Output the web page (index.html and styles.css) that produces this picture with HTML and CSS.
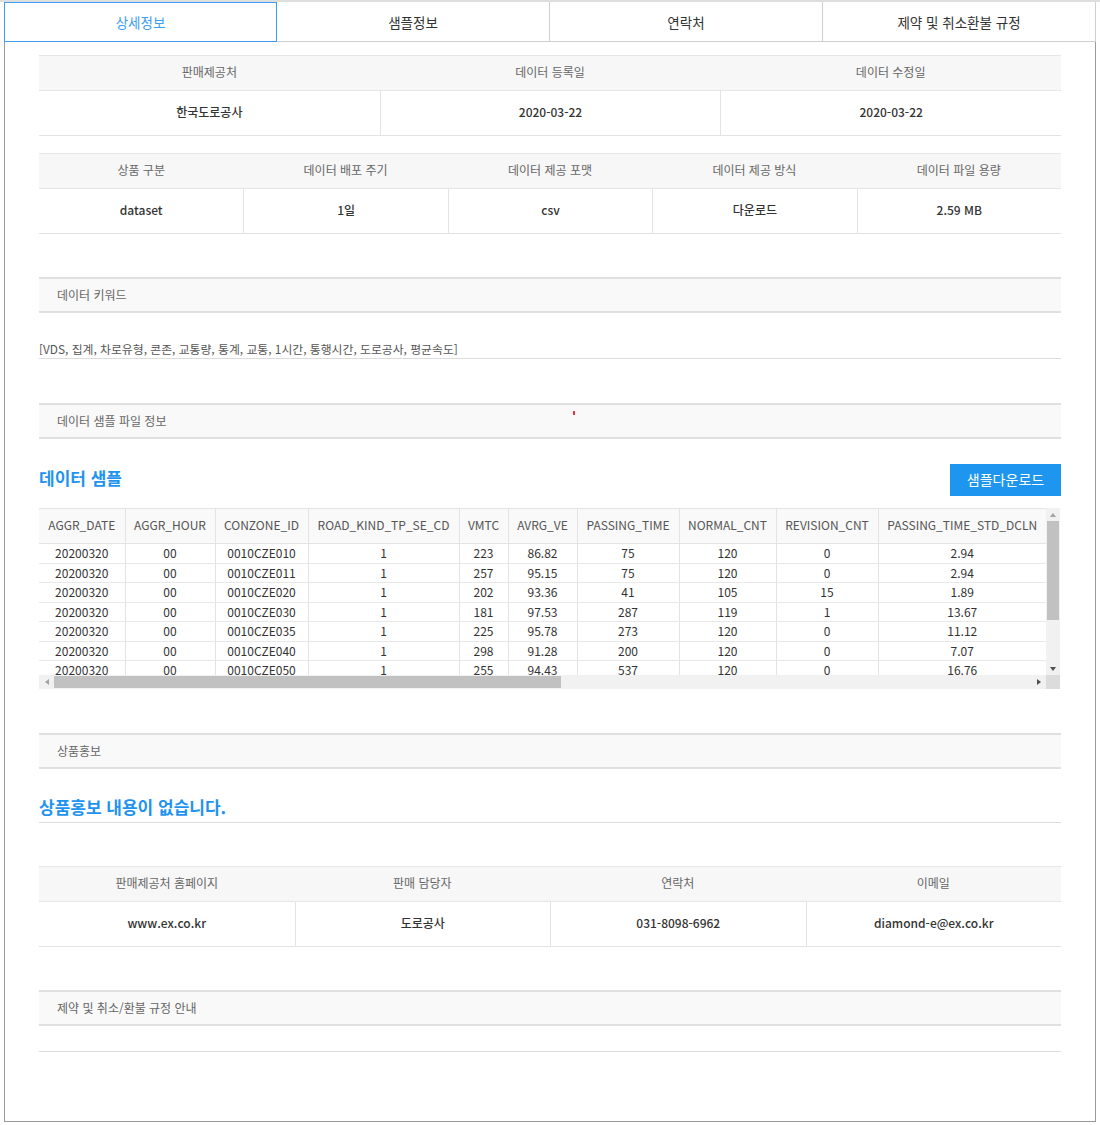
FILE: index.html
```html
<!DOCTYPE html>
<html lang="ko">
<head>
<meta charset="utf-8">
<title>상세정보</title>
<link rel="stylesheet" href="styles.css">
</head>
<body>
<div class="topline"></div>
<div class="page">
  <nav class="tabs">
    <div class="tab active">상세정보</div>
    <div class="tab">샘플정보</div>
    <div class="tab">연락처</div>
    <div class="tab">제약 및 취소환불 규정</div>
  </nav>
  <div class="content">
    <div class="info cols3">
      <div class="info-head"><div>판매제공처</div><div>데이터 등록일</div><div>데이터 수정일</div></div>
      <div class="info-body"><div>한국도로공사</div><div>2020-03-22</div><div>2020-03-22</div></div>
    </div>
    <div class="info cols5 gap17">
      <div class="info-head"><div>상품 구분</div><div>데이터 배포 주기</div><div>데이터 제공 포맷</div><div>데이터 제공 방식</div><div>데이터 파일 용량</div></div>
      <div class="info-body"><div>dataset</div><div>1일</div><div>csv</div><div>다운로드</div><div>2.59 MB</div></div>
    </div>

    <div class="sec-head gap43">데이터 키워드</div>
    <div class="keywords">[VDS, 집계, 차로유형, 콘존, 교통량, 통계, 교통, 1시간, 통행시간, 도로공사, 평균속도]</div>

    <div class="sec-head gap44 rel">데이터 샘플 파일 정보<span class="redmark"></span></div>
    <div class="sample-title">
      <h2 class="blue-title">데이터 샘플</h2>
      <button class="btn">샘플다운로드</button>
    </div>

    <div class="grid-wrap">
      <div class="viewport">
        <table class="data">
          <colgroup>
            <col style="width:86px"><col style="width:90px"><col style="width:93px"><col style="width:151px"><col style="width:49px"><col style="width:69px"><col style="width:102px"><col style="width:97px"><col style="width:102px"><col style="width:168px">
          </colgroup>
          <thead>
            <tr><th>AGGR_DATE</th><th>AGGR_HOUR</th><th>CONZONE_ID</th><th>ROAD_KIND_TP_SE_CD</th><th>VMTC</th><th>AVRG_VE</th><th>PASSING_TIME</th><th>NORMAL_CNT</th><th>REVISION_CNT</th><th>PASSING_TIME_STD_DCLN</th></tr>
          </thead>
          <tbody>
            <tr><td>20200320</td><td>00</td><td>0010CZE010</td><td>1</td><td>223</td><td>86.82</td><td>75</td><td>120</td><td>0</td><td>2.94</td></tr>
            <tr><td>20200320</td><td>00</td><td>0010CZE011</td><td>1</td><td>257</td><td>95.15</td><td>75</td><td>120</td><td>0</td><td>2.94</td></tr>
            <tr><td>20200320</td><td>00</td><td>0010CZE020</td><td>1</td><td>202</td><td>93.36</td><td>41</td><td>105</td><td>15</td><td>1.89</td></tr>
            <tr><td>20200320</td><td>00</td><td>0010CZE030</td><td>1</td><td>181</td><td>97.53</td><td>287</td><td>119</td><td>1</td><td>13.67</td></tr>
            <tr><td>20200320</td><td>00</td><td>0010CZE035</td><td>1</td><td>225</td><td>95.78</td><td>273</td><td>120</td><td>0</td><td>11.12</td></tr>
            <tr><td>20200320</td><td>00</td><td>0010CZE040</td><td>1</td><td>298</td><td>91.28</td><td>200</td><td>120</td><td>0</td><td>7.07</td></tr>
            <tr><td>20200320</td><td>00</td><td>0010CZE050</td><td>1</td><td>255</td><td>94.43</td><td>537</td><td>120</td><td>0</td><td>16.76</td></tr>
          </tbody>
        </table>
      </div>
      <div class="vbar">
        <div class="arrow up"></div>
        <div class="vtrack"><div class="vthumb"></div></div>
        <div class="arrow down"></div>
      </div>
      <div class="hbar">
        <div class="harrow left"></div>
        <div class="htrack"><div class="hthumb"></div></div>
        <div class="harrow right"></div>
      </div>
      <div class="corner"></div>
    </div>

    <div class="sec-head gap44">상품홍보</div>
    <div class="promo">상품홍보 내용이 없습니다.</div>

    <div class="info cols4 gap43">
      <div class="info-head"><div>판매제공처 홈페이지</div><div>판매 담당자</div><div>연락처</div><div>이메일</div></div>
      <div class="info-body"><div>www.ex.co.kr</div><div>도로공사</div><div>031-8098-6962</div><div>diamond-e@ex.co.kr</div></div>
    </div>

    <div class="sec-head gap43">제약 및 취소/환불 규정 안내</div>
    <div class="terms"></div>
  </div>
</div>
</body>
</html>
```

FILE: styles.css
```css
* { box-sizing: border-box; }
html, body { margin: 0; padding: 0; background: #fff; }
body {
  font-family: "Noto Sans CJK KR", "Noto Sans", "Liberation Sans", sans-serif;
  color: #333;
}
.topline { height: 2px; background: #dedede; }
.page {
  margin-left: 4px;
  width: 1092px;
  border-left: 1px solid #9a9a9a;
  border-right: 1px solid #9a9a9a;
  border-bottom: 1px solid #9a9a9a;
}
.tabs {
  display: grid;
  grid-template-columns: repeat(4, 1fr);
  height: 40px;
  margin-left: -1px;
  margin-right: -1px;
}
.tab {
  display: flex;
  align-items: center;
  justify-content: center;
  font-size: 13.5px;
  color: #333;
  border: 1px solid #cfcfcf;
  border-left: none;
  border-top: none;
  background: #fff;
}
.tab:first-child { border-left: 1px solid #cfcfcf; }
.tab.active {
  color: #3d9df2;
  border: 1px solid #3d9df2;
}
.content {
  padding: 13px 34px 69px 34px;
}
.info { border-top: 1px solid #e6e6e6; }
.info-head, .info-body { display: grid; }
.cols3 .info-head, .cols3 .info-body { grid-template-columns: repeat(3, 1fr); }
.cols4 .info-head, .cols4 .info-body { grid-template-columns: repeat(4, 1fr); }
.cols5 .info-head, .cols5 .info-body { grid-template-columns: repeat(5, 1fr); }
.info-head {
  background: #f7f7f7;
  height: 35px;
  border-bottom: 1px solid #e6e6e6;
}
.info-head > div {
  display: flex; align-items: center; justify-content: center;
  padding-bottom: 4px;
  font-size: 12px; color: #666;
}
.info-body {
  height: 45px;
  border-bottom: 1px solid #e3e3e3;
}
.info-body > div {
  display: flex; align-items: center; justify-content: center;
  padding-bottom: 3px;
  font-size: 12px; font-weight: 500; color: #333;
  border-left: 1px solid #e3e3e3;
}
.info-body > div:first-child { border-left: none; }
.gap17 { margin-top: 17px; }
.gap43 { margin-top: 43px; }
.gap44 { margin-top: 44px; }

.sec-head {
  height: 36px;
  border-top: 2px solid #e0e0e0;
  border-bottom: 2px solid #e0e0e0;
  background: #f9f9f9;
  display: flex;
  align-items: center;
  padding-left: 18px;
  padding-bottom: 2px;
  font-size: 12px;
  color: #666;
}
.rel { position: relative; }
.redmark {
  position: absolute;
  left: 534px;
  top: 6px;
  width: 2px;
  height: 4px;
  background: #e8323a;
}
.keywords {
  margin-top: 27px;
  height: 19px;
  line-height: 18px;
  font-size: 11.85px;
  color: #555;
  border-bottom: 1px solid #dcdcdc;
}
.sample-title {
  margin-top: 25px;
  height: 32px;
  display: flex;
  align-items: center;
  justify-content: space-between;
}
.blue-title {
  margin: 0 0 6px 0;
  font-size: 17px;
  font-weight: 700;
  color: #1e93ef;
}
.btn {
  width: 111px;
  height: 32px;
  border: none;
  background: #1e96f0;
  color: #fff;
  font-family: inherit;
  font-size: 14px;
  padding: 0 0 2px 0;
}
.grid-wrap {
  margin-top: 12px;
  display: grid;
  grid-template-columns: 1007px 14px;
  grid-template-rows: 167px 14px;
}
.viewport { overflow: hidden; }
.data {
  border-collapse: collapse;
  table-layout: fixed;
  width: 1007px;
}
.data th {
  height: 35px;
  background: #f9f9f9;
  border-top: 1px solid #e3e3e3;
  border-bottom: 1px solid #e3e3e3;
  border-left: 1px solid #e3e3e3;
  font-weight: 400;
  font-size: 12px;
  color: #555;
  padding: 0 0 3px 0;
  white-space: nowrap;
}
.data td {
  height: 19.5px;
  padding: 0;
  text-align: center;
  font-size: 12px;
  color: #333;
  border-bottom: 1px solid #e8e8e8;
  border-left: 1px solid #e3e3e3;
  line-height: 18px;
  white-space: nowrap;
}
.data th:first-child, .data td:first-child { border-left: none; }
.vbar {
  background: #f1f1f1;
  display: flex;
  flex-direction: column;
}
.arrow { height: 13px; display: flex; align-items: center; justify-content: center; }
.arrow::before {
  content: "";
  border-left: 3.5px solid transparent;
  border-right: 3.5px solid transparent;
}
.arrow.up::before { border-bottom: 4px solid #a3a3a3; }
.arrow.down::before { border-top: 4px solid #505050; }
.vtrack { flex: 1; }
.vthumb { width: 12px; height: 99px; background: #c1c1c1; margin: 0 auto; }
.hbar {
  background: #f1f1f1;
  display: flex;
  align-items: stretch;
}
.harrow { width: 15px; display: flex; align-items: center; justify-content: center; }
.harrow::before {
  content: "";
  border-top: 3.5px solid transparent;
  border-bottom: 3.5px solid transparent;
}
.harrow.left::before { border-right: 4px solid #a3a3a3; }
.harrow.right::before { border-left: 4px solid #505050; }
.htrack { flex: 1; display: flex; align-items: center; }
.hthumb { width: 507px; height: 12px; background: #c1c1c1; }
.corner { background: #dcdcdc; }
.promo {
  margin-top: 25px;
  line-height: 26px;
  padding-bottom: 2px;
  border-bottom: 1px solid #dcdcdc;
  font-size: 17px;
  font-weight: 700;
  color: #1e93ef;
}
.terms {
  height: 26px;
  border-bottom: 1px solid #dcdcdc;
}
```
